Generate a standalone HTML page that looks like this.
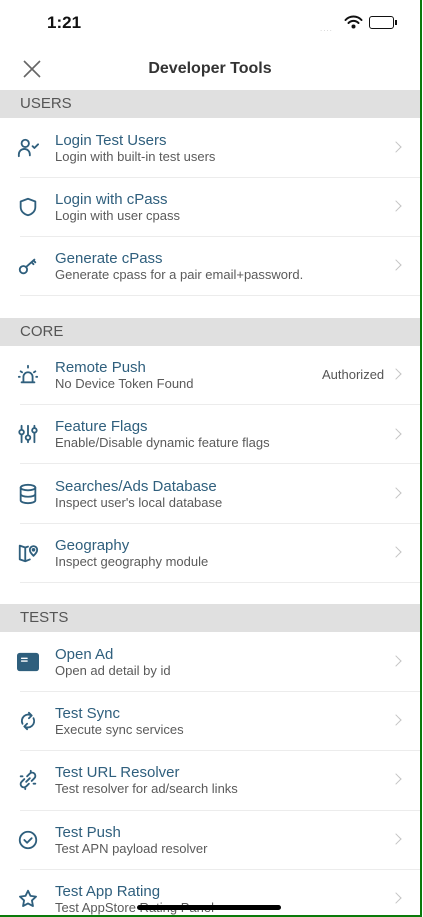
<!DOCTYPE html>
<html><head><meta charset="utf-8">
<style>
*{margin:0;padding:0;box-sizing:border-box}
body{width:423px;height:917px;overflow:hidden;background:#fff;font-family:"Liberation Sans",sans-serif;position:relative}
.a{position:absolute}
.hdr{position:absolute;left:0;width:420px;height:28px;background:#e0e0e0;color:#555;font-size:15px;line-height:28px;padding-left:20px}
.t{position:absolute;left:55px;font-size:15px;color:#2f5f7d;line-height:18px}
.s{position:absolute;left:55px;font-size:13px;color:#5a5a5a;line-height:16px}
.sep{position:absolute;left:20px;width:400px;height:1px;background:#ececec}
.ch{position:absolute;left:392px;width:8px;height:8px;border-top:1.5px solid #c4c4c4;border-right:1.5px solid #c4c4c4;transform:rotate(45deg)}
svg.i{position:absolute;left:17px;width:22px;height:22px;fill:none;stroke:#2f5f7d;stroke-width:2;stroke-linecap:round;stroke-linejoin:round}
</style></head><body>
<div class="a" style="left:47px;top:13px;font-size:17px;font-weight:bold;color:#111">1:21</div>
<div class="a" style="left:320px;top:24px;font-size:8px;color:#ccc;letter-spacing:1px">....</div>
<svg class="a" style="left:344px;top:15px" width="19" height="14" viewBox="0 0 18 14"><path d="M1 5a11 11 0 0 1 16 0M4 8a7 7 0 0 1 10 0" stroke="#111" stroke-width="2" fill="none" stroke-linecap="round"/><circle cx="9" cy="11.5" r="2" fill="#111"/></svg>
<div class="a" style="left:369px;top:16px;width:25px;height:13px;border:1.5px solid #111;border-radius:3px"></div>
<div class="a" style="left:395px;top:20px;width:2px;height:5px;background:#111"></div>
<svg class="a" style="left:22px;top:59px" width="20" height="20" viewBox="0 0 20 20"><path d="M2 2L18 18M18 2L2 18" stroke="#666" stroke-width="1.6"/></svg>
<div class="a" style="left:0;width:420px;top:60px;text-align:center;font-size:16px;font-weight:bold;color:#333">Developer Tools</div>

<div class="hdr" style="top:90px">USERS</div>
<svg class="i" style="top:137px" viewBox="0 0 24 24"><circle cx="9" cy="7" r="4"/><path d="M2 21v-2a6 6 0 0 1 12 0v1M17 10l2 2 4-4"/></svg>
<div class="t" style="top:132px">Login Test Users</div><div class="s" style="top:149px">Login with built-in test users</div><div class="ch" style="top:143px"></div>
<div class="sep" style="top:177px"></div>
<svg class="i" style="top:196px" viewBox="0 0 24 24"><path d="M12 3l8 3v6c0 5-4 8-8 9-4-1-8-4-8-9V6z"/></svg>
<div class="t" style="top:191px">Login with cPass</div><div class="s" style="top:208px">Login with user cpass</div><div class="ch" style="top:202px"></div>
<div class="sep" style="top:236px"></div>
<svg class="i" style="top:255px" viewBox="0 0 24 24"><circle cx="7" cy="16" r="4"/><path d="M10 13l9-8M16 8l2 2M18 6l2 2"/></svg>
<div class="t" style="top:250px">Generate cPass</div><div class="s" style="top:267px">Generate cpass for a pair email+password.</div><div class="ch" style="top:261px"></div>
<div class="sep" style="top:295px"></div>

<div class="hdr" style="top:318px">CORE</div>
<svg class="i" style="top:364px" viewBox="0 0 24 24"><path d="M7 19v-5a5 5 0 0 1 10 0v5M5 20h14M12 2v2M4 8l1.5 1M20 8l-1.5 1M2 14h1M21 14h1"/></svg>
<div class="t" style="top:359px">Remote Push</div><div class="s" style="top:376px">No Device Token Found</div>
<div class="a" style="left:322px;top:367px;font-size:13px;color:#555">Authorized</div><div class="ch" style="top:370px"></div>
<div class="sep" style="top:404px"></div>
<svg class="i" style="top:423px" viewBox="0 0 24 24"><path d="M5 3v4M5 13v8M12 3v10M12 19v2M19 3v2M19 11v10"/><circle cx="5" cy="10" r="2.5"/><circle cx="12" cy="16" r="2.5"/><circle cx="19" cy="8" r="2.5"/></svg>
<div class="t" style="top:418px">Feature Flags</div><div class="s" style="top:435px">Enable/Disable dynamic feature flags</div><div class="ch" style="top:430px"></div>
<div class="sep" style="top:463px"></div>
<svg class="i" style="top:483px" viewBox="0 0 24 24"><ellipse cx="12" cy="5" rx="8" ry="3"/><path d="M4 5v14c0 1.7 3.6 3 8 3s8-1.3 8-3V5M4 12c0 1.7 3.6 3 8 3s8-1.3 8-3"/></svg>
<div class="t" style="top:478px">Searches/Ads Database</div><div class="s" style="top:495px">Inspect user's local database</div><div class="ch" style="top:489px"></div>
<div class="sep" style="top:523px"></div>
<svg class="i" style="top:542px" viewBox="0 0 24 24"><path d="M9 6L3 4v15l6 2 5-2M9 6v15M9 6l3-1"/><path d="M18 15s-4-3.5-4-6.5a4 4 0 0 1 8 0c0 3-4 6.5-4 6.5z"/><circle cx="18" cy="8.5" r="1"/></svg>
<div class="t" style="top:537px">Geography</div><div class="s" style="top:554px">Inspect geography module</div><div class="ch" style="top:548px"></div>
<div class="sep" style="top:582px"></div>

<div class="hdr" style="top:604px">TESTS</div>
<svg class="i" style="top:651px" viewBox="0 0 24 24"><rect x="1" y="3" width="22" height="18" rx="2" fill="#2f5f7d"/><path d="M5 8h6M5 11h6" stroke="#fff" stroke-width="1.5"/></svg>
<div class="t" style="top:646px">Open Ad</div><div class="s" style="top:663px">Open ad detail by id</div><div class="ch" style="top:657px"></div>
<div class="sep" style="top:691px"></div>
<svg class="i" style="top:710px" viewBox="0 0 24 24"><path d="M6 15a7 7 0 0 1 10-9M18 9a7 7 0 0 1-10 9M13 3l3 3-3 3M11 21l-3-3 3-3"/></svg>
<div class="t" style="top:705px">Test Sync</div><div class="s" style="top:722px">Execute sync services</div><div class="ch" style="top:716px"></div>
<div class="sep" style="top:750px"></div>
<svg class="i" style="top:769px" viewBox="0 0 24 24"><path d="M10 14l4-4M8 11l-3 3a3 3 0 0 0 5 5l3-3M16 13l3-3a3 3 0 0 0-5-5l-3 3M4 8h2M18 16h2M15 2v2M9 20v2"/></svg>
<div class="t" style="top:764px">Test URL Resolver</div><div class="s" style="top:781px">Test resolver for ad/search links</div><div class="ch" style="top:775px"></div>
<div class="sep" style="top:810px"></div>
<svg class="i" style="top:829px" viewBox="0 0 24 24"><circle cx="12" cy="12" r="9"/><path d="M8 12l3 3 5-5"/></svg>
<div class="t" style="top:824px">Test Push</div><div class="s" style="top:841px">Test APN payload resolver</div><div class="ch" style="top:835px"></div>
<div class="sep" style="top:869px"></div>
<svg class="i" style="top:888px" viewBox="0 0 24 24"><path d="M12 3l2.7 5.6 6.1.8-4.5 4.2 1.1 6.1L12 16.8l-5.4 2.9 1.1-6.1-4.5-4.2 6.1-.8z"/></svg>
<div class="t" style="top:883px">Test App Rating</div><div class="s" style="top:900px">Test AppStore Rating Panel</div><div class="ch" style="top:894px"></div>
<div class="a" style="left:137px;top:905px;width:144px;height:5px;border-radius:3px;background:#000"></div>
<div class="a" style="left:420px;top:0;width:2px;height:917px;background:#0a7a0a"></div>
<div class="a" style="left:0;top:915px;width:422px;height:2px;background:#0a7a0a"></div>
</body></html>
